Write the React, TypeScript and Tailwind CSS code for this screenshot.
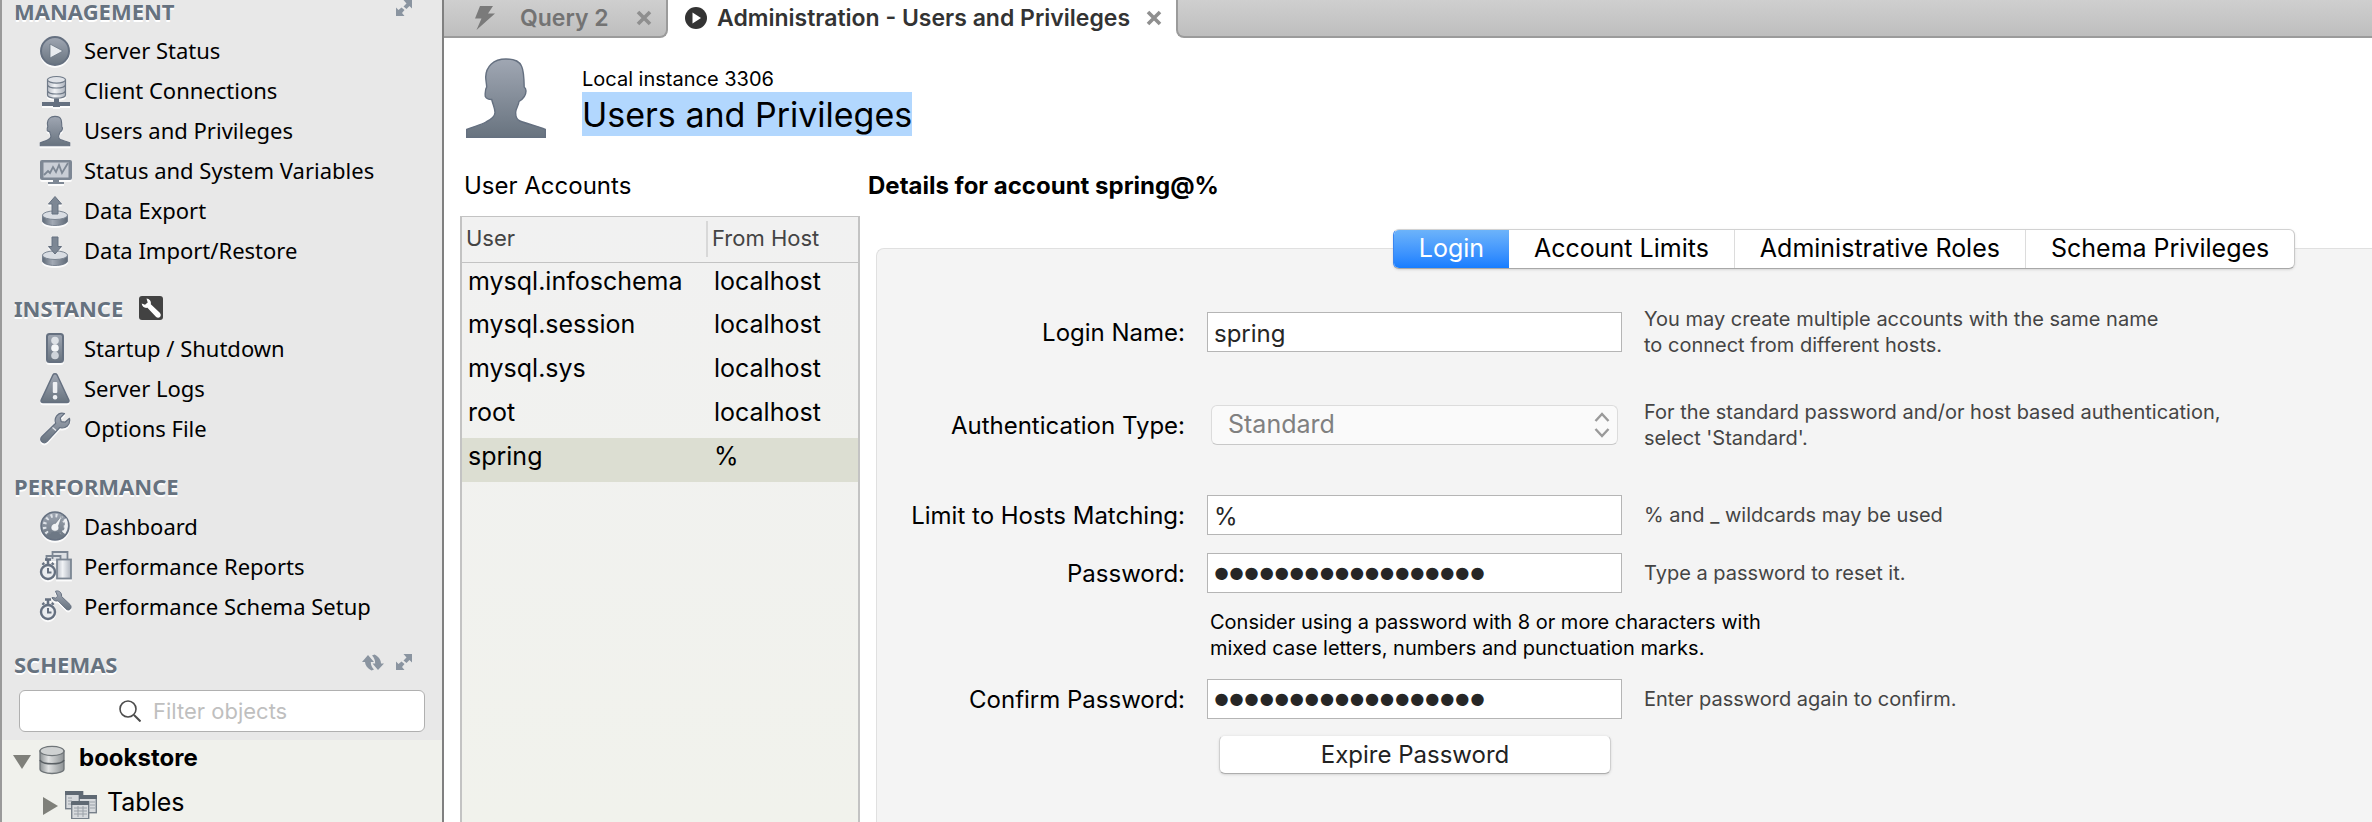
import type { ReactNode } from "react";

const Glyph = ({ children }: { children: ReactNode }) => (
  <svg
    viewBox="0 0 32 32"
    className="h-8 w-8 shrink-0 overflow-visible drop-shadow-[0_2px_0_rgba(255,255,255,0.85)]"
    aria-hidden="true"
  >
    {children}
  </svg>
);

const Defs = () => (
  <svg className="absolute h-0 w-0" aria-hidden="true">
    <defs>
      <linearGradient id="steel" x1="0" y1="0" x2="0" y2="1">
        <stop offset="0" stopColor="#a0a7b3" />
        <stop offset="1" stopColor="#68737f" />
      </linearGradient>
      <linearGradient id="pale" x1="0" y1="0" x2="1" y2="0">
        <stop offset="0" stopColor="#b9bec7" />
        <stop offset="0.4" stopColor="#f1f3f6" />
        <stop offset="1" stopColor="#adb3bd" />
      </linearGradient>
      <linearGradient id="rim" x1="0" y1="0" x2="1" y2="0">
        <stop offset="0" stopColor="#5f6a77" />
        <stop offset="0.4" stopColor="#a3aab5" />
        <stop offset="1" stopColor="#5f6a77" />
      </linearGradient>
      <linearGradient id="metal" x1="0" y1="0" x2="1" y2="0">
        <stop offset="0" stopColor="#8d9294" />
        <stop offset="0.35" stopColor="#e0e2e2" />
        <stop offset="1" stopColor="#8d9294" />
      </linearGradient>
    </defs>
  </svg>
);

const PlayIcon = () => (
  <Glyph>
    <circle cx="15" cy="17" r="14" fill="url(#steel)" stroke="#657080" strokeWidth="2" />
    <path d="M10 10v14l13-7z" fill="#e8ebef" stroke="#6b7684" strokeWidth="0.8" />
  </Glyph>
);

const ClientIcon = () => (
  <Glyph>
    <path d="M7.5 6v15c0 1.8 4 3.2 9 3.2s9-1.4 9-3.2V6z" fill="url(#pale)" stroke="#6f7a88" strokeWidth="1.2" />
    <ellipse cx="16.5" cy="5.8" rx="9" ry="3.3" fill="#dfe2e7" stroke="#6f7a88" strokeWidth="1.2" />
    <path d="M7.5 11c1 4 17 4 18 0M7.5 17c1 4 17 4 18 0" fill="none" stroke="#6f7a88" strokeWidth="1.2" />
    <path d="M14 24.5h5v3.5h-5z" fill="#657080" />
    <path d="M2 28h28v4h-10v1h-7v-1H2z" fill="#657080" />
  </Glyph>
);

const personPath =
  "M40 1C48 1 53 2.5 55.5 8C57.5 12 58 18 58.2 29C59.5 30 60 31 60 33C60 38 57 41 53 43.5C52.5 48 50 50 49.7 54C49.5 58 50.5 61.5 54 63C61 66 72 68 79.3 71.5V79.4H0.7V71.5C7 68.5 14 67.5 20 64C25 61.5 29 59 29 54.5C29 50 27 47 25.7 41.5C22 41.5 20.5 41 19.3 38.5C19 35 19.3 31 20.7 29C20.5 25 19.7 22 19.7 19C20 9 27 1 40 1Z";

const PersonIcon = () => (
  <Glyph>
    <g transform="translate(0 2) scale(0.375)">
      <path d={personPath} fill="url(#steel)" stroke="#657080" strokeWidth="3" />
    </g>
  </Glyph>
);

const MonitorIcon = () => (
  <Glyph>
    <rect x="0" y="6" width="32" height="20" rx="2" fill="#7d8794" />
    <rect x="3.5" y="8.5" width="25" height="15" fill="#c9ced6" />
    <path d="M4 21l4-4 2 2 3-6 3 5 3-7 3 8 6-10" fill="none" stroke="#7d8794" strokeWidth="1.8" />
    <path d="M13 26h6v2h5v2H8v-2h5z" fill="#7d8794" />
  </Glyph>
);

const Disk = () => (
  <>
    <path d="M2.5 21v6c0 2.5 5.8 4.5 12.5 4.5s12.5-2 12.5-4.5v-6z" fill="url(#rim)" stroke="#657080" strokeWidth="0.8" />
    <ellipse cx="15" cy="21.2" rx="12.5" ry="4.3" fill="#d9dde3" stroke="#7b8592" strokeWidth="1" />
  </>
);

const ExportIcon = () => (
  <Glyph>
    <Disk />
    <path d="M15 2.5l6.5 7.5h-3.5v10h-6V10H8.5z" fill="#7d8794" stroke="#657080" strokeWidth="1" />
  </Glyph>
);

const ImportIcon = () => (
  <Glyph>
    <Disk />
    <path d="M15 20l6.5-7.5h-3.5V3h-6v9.5H8.5z" fill="#7d8794" stroke="#657080" strokeWidth="1" />
  </Glyph>
);

const TrafficIcon = () => (
  <Glyph>
    <rect x="7" y="2" width="16" height="28" rx="2.5" fill="url(#steel)" stroke="#657080" strokeWidth="2" />
    <circle cx="15" cy="8.5" r="3.8" fill="#dde1e6" />
    <circle cx="15" cy="16" r="3.8" fill="#f4f6f8" />
    <circle cx="15" cy="23.5" r="3.8" fill="#cfd4da" />
  </Glyph>
);

const WarningIcon = () => (
  <Glyph>
    <path
      d="M13 2.8c.8-1.4 3.2-1.4 4 0L28.8 28c.6 1.4-.3 2.5-1.8 2.5H3c-1.5 0-2.4-1.1-1.8-2.5z"
      fill="url(#steel)"
      stroke="#657080"
      strokeWidth="1.5"
    />
    <rect x="12.8" y="10" width="4.5" height="11" rx="1" fill="#eef0f3" />
    <rect x="12.8" y="23" width="4.5" height="4.5" rx="2" fill="#eef0f3" />
  </Glyph>
);

const wrenchPath =
  "M24.5 1.5c-3-.9-6.3.2-8 2.7-1.5 2.2-1.7 4.8-.8 7L2 24.5c-1.8 1.8-1.7 4 0 5.4 1.5 1.3 3.6 1.1 5.2-.6L19.8 15.5c2.6.9 5.2.5 7.3-1.2 2.2-1.8 3-4.6 2.4-8L25 10.2l-3.8-.5-.9-3.9z";

const WrenchIcon = () => (
  <Glyph>
    <path d={wrenchPath} fill="url(#steel)" stroke="#657080" strokeWidth="1.2" strokeLinejoin="round" />
    <path d="M12.5 15.5l3.5 3" stroke="#e3e6ea" strokeWidth="1.2" />
  </Glyph>
);

const GaugeIcon = () => (
  <Glyph>
    <circle cx="15" cy="16" r="14" fill="url(#steel)" stroke="#657080" strokeWidth="1.5" />
    <circle cx="15" cy="16" r="10.5" fill="none" stroke="#dfe3e8" strokeWidth="3.5" strokeDasharray="2 3" pathLength="66" />
    <path d="M25 9c2 4 2 10-1 14" fill="none" stroke="#eef0f3" strokeWidth="3" />
    <path d="M7 26c4 4 12 4 16 0l-5-4h-6z" fill="#6d7885" />
    <path
      d="M22.5 4.5L18.5 16c1.2 2.8-.6 5.2-3.5 5.2-3.5 0-5.2-3.5-3-6.2 1.2-1.3 2.2-1.5 3.5-1.6z"
      fill="#f1f3f5"
      stroke="#6d7885"
      strokeWidth="0.6"
    />
  </Glyph>
);

const Stopwatch = () => (
  <>
    <path d="M5 9.5h6M8 9.5v5M2.5 13l1.5 1.5M13.5 13L12 14.5" stroke="#657080" strokeWidth="2.6" />
    <circle cx="8" cy="22" r="7" fill="#eceef1" stroke="#657080" strokeWidth="2.4" />
    <path d="M8 18v4.5h3.5" fill="none" stroke="#657080" strokeWidth="2" />
  </>
);

const ReportsIcon = () => (
  <Glyph>
    <path d="M12.5 9V2h15v7M6.5 11V6h14v5" fill="#dde0e4" stroke="#7b8592" strokeWidth="1.8" />
    <rect x="17" y="9.5" width="14" height="19" fill="url(#pale)" stroke="#7b8592" strokeWidth="1.8" />
    <Stopwatch />
  </Glyph>
);

const SetupIcon = () => (
  <Glyph>
    <Stopwatch />
    <path
      d="M15.5 1.2c3-1 5.8.8 6 3.8l.1 1.5 8.4 8c1.5 1.5 1.3 3.6.2 4.7-1.2 1.1-3 1-4.2-.3L18 10.8c-2.7.8-5.2-.6-6-3.3l3.6.5 2-1.7z"
      fill="url(#steel)"
      stroke="#657080"
      strokeWidth="1"
    />
  </Glyph>
);

const ExpandIcon = () => (
  <svg viewBox="0 0 16 16" className="h-4 w-4" aria-hidden="true">
    <path d="M7.5 0H16v8.5l-2.5-2.5-3 3L7.500 6.500l3-3zM8.5 16H0V7.500L2.500 10l3-2.500L8.500 10l-2.500 3z" fill="#8a94a0" />
  </svg>
);

const RefreshIcon = () => (
  <svg viewBox="0 0 22 17" className="h-[17px] w-[22px]" aria-hidden="true">
    <path d="M6 1l6 7H8.800c0 3 1.200 5.500 3.200 7.500L9.500 16.500C5.500 14.500 3.200 11.500 3 8H0z" fill="#8a94a0" />
    <path d="M16 16l6-6.500h-3C19 5.500 16.500 2.500 12.500.5L10 1.500c2 2 3.200 4.500 3.200 8H10.500z" fill="#8a94a0" />
  </svg>
);

type NavItem = { label: string; icon: ReactNode };

const management: NavItem[] = [
  { label: "Server Status", icon: <PlayIcon /> },
  { label: "Client Connections", icon: <ClientIcon /> },
  { label: "Users and Privileges", icon: <PersonIcon /> },
  { label: "Status and System Variables", icon: <MonitorIcon /> },
  { label: "Data Export", icon: <ExportIcon /> },
  { label: "Data Import/Restore", icon: <ImportIcon /> },
];

const instance: NavItem[] = [
  { label: "Startup / Shutdown", icon: <TrafficIcon /> },
  { label: "Server Logs", icon: <WarningIcon /> },
  { label: "Options File", icon: <WrenchIcon /> },
];

const performance: NavItem[] = [
  { label: "Dashboard", icon: <GaugeIcon /> },
  { label: "Performance Reports", icon: <ReportsIcon /> },
  { label: "Performance Schema Setup", icon: <SetupIcon /> },
];

const NavList = ({ items }: { items: NavItem[] }) => (
  <ul>
    {items.map((item) => (
      <li key={item.label}>
        <a href="#" className="flex h-10 items-center gap-3 pl-[38px] text-[22px] whitespace-nowrap text-black">
          {item.icon}
          {item.label}
        </a>
      </li>
    ))}
  </ul>
);

const heading = "text-[22px] font-bold text-[#66727f] [text-shadow:0_2px_0_#fff]";

const Sidebar = () => (
  <aside className="flex w-[444px] shrink-0 flex-col border-r-2 border-l-2 border-r-[#808080] border-l-[#9a9a9a] bg-[#e8e8e8] font-['Noto_Sans',sans-serif]">
    <div className="flex h-[30px] items-start justify-between pr-[30px] pl-3">
      <h2 className={`${heading} leading-[22px]`}>MANAGEMENT</h2>
      <button type="button" aria-label="Expand management">
        <ExpandIcon />
      </button>
    </div>
    <NavList items={management} />
    <div className="mt-[18px] flex h-10 items-center gap-4 pl-3">
      <h2 className={heading}>INSTANCE</h2>
      <svg viewBox="0 0 24 24" className="h-6 w-6" aria-hidden="true">
        <rect width="24" height="24" rx="3" fill="#424242" />
        <path
          d="M7.5 2.5c3 .2 5 2.8 4.3 5.7l9 8.6c1.4 1.5 1.2 3.2.2 4.2-1.1 1.1-2.9 1-4.1-.3l-8.500-8.900C5.600 12.500 3 10.500 2.700 7.500l3.300 1.300 2.700-2.400z"
          fill="#fff"
        />
      </svg>
    </div>
    <NavList items={instance} />
    <div className="mt-[18px] flex h-10 items-center pl-3">
      <h2 className={heading}>PERFORMANCE</h2>
    </div>
    <NavList items={performance} />
    <div className="mt-[18px] flex h-10 items-center pr-[30px] pl-3">
      <h2 className={`${heading} mr-auto`}>SCHEMAS</h2>
      <div className="flex items-center gap-3 pb-1">
        <button type="button" aria-label="Refresh schemas">
          <RefreshIcon />
        </button>
        <button type="button" aria-label="Expand schemas">
          <ExpandIcon />
        </button>
      </div>
    </div>
    <label className="mx-[17px] mt-1.5 mb-2 flex h-[42px] items-center gap-3 rounded-md border border-[#b0b0b0] bg-white pl-[99px] font-[Inter,sans-serif]">
      <svg viewBox="0 0 22 22" className="h-[22px] w-[22px] shrink-0" aria-hidden="true">
        <circle cx="9" cy="9" r="8" fill="none" stroke="#4c4c4c" strokeWidth="1.6" />
        <path d="M15 15l6.5 6.5" stroke="#4c4c4c" strokeWidth="2" />
      </svg>
      <input
        type="search"
        aria-label="Filter objects"
        placeholder="Filter objects"
        className="w-full min-w-0 bg-transparent text-[22px] outline-none placeholder:text-[#bfbfbf]"
      />
    </label>
    <ul className="flex-1 bg-[#f0f1ec] font-[Inter,sans-serif] text-black">
      <li className="flex h-9 items-center pl-[11px] text-[24px] font-bold">
        <svg viewBox="0 0 18 16" className="mt-2 h-4 w-[18px]" aria-hidden="true">
          <path d="M0 1h18L9 15z" fill="#7f807a" />
        </svg>
        <svg viewBox="0 0 26 30" className="mt-1 ml-2 h-[30px] w-[26px]" aria-hidden="true">
          <path d="M1 6v18c0 2.600 5.300 4.500 12 4.500s12-1.900 12-4.500V6z" fill="url(#metal)" stroke="#6f7578" strokeWidth="1.3" />
          <ellipse cx="13" cy="6" rx="12" ry="4.6" fill="#cfd2d2" stroke="#6f7578" strokeWidth="1.3" />
          <path d="M1 15c2 5 22 5 24 0" fill="none" stroke="#5a6064" strokeWidth="1.6" />
        </svg>
        <span className="ml-3.5">bookstore</span>
      </li>
      <li className="mt-2 flex h-[38px] items-center pl-[41px] text-[25px]">
        <svg viewBox="0 0 16 18" className="mt-1.5 h-[18px] w-4" aria-hidden="true">
          <path d="M0 0l15 9-15 9z" fill="#7f807a" />
        </svg>
        <svg viewBox="0 0 32 28" className="mt-1 ml-1.5 h-7 w-8" aria-hidden="true">
          <g strokeWidth="1.4" stroke="#77808a" fill="#d7dadd">
            <rect x="0.7" y="0.7" width="17" height="17" />
            <rect x="14.3" y="4.7" width="17" height="17" />
            <rect x="6.7" y="10.7" width="17" height="17" />
          </g>
          <path d="M0 0h18v4H0zM14 4h18v4H14zM6 10h18v4H6z" fill="#5f6973" />
          <path
            d="M9 17h13M9 20h13M9 23h13M13 15v11M18 15v11M3 7h4M3 10h4M3 13h3M25 11h5M25 14h5M25 17h5"
            stroke="#9aa1a8"
            strokeWidth="1"
          />
        </svg>
        <span className="ml-2.5">Tables</span>
      </li>
    </ul>
  </aside>
);

const CloseMark = () => (
  <svg viewBox="0 0 16 16" className="h-4 w-4" aria-hidden="true">
    <path d="M2 2l12 12M14 2L2 14" stroke="#8f8f8f" strokeWidth="3.6" />
  </svg>
);

const inactiveTab = "border-b-2 border-[#9b9b9b] bg-linear-to-b from-[#cfcfcf] to-[#bebebe]";

const TabBar = () => (
  <div className="flex h-[38px] bg-white text-[23px] font-semibold">
    <div className={`flex w-[224px] items-center rounded-br-lg border-r-2 pl-[30px] ${inactiveTab}`}>
      <svg viewBox="0 0 22 24" className="h-6 w-[22px]" aria-hidden="true">
        <path d="M6 0h13l-5 7.5h7L2.500 24l5-11.500H1z" fill="#7a7a7a" />
      </svg>
      <button type="button" className="ml-6 text-[#737373]">
        Query 2
      </button>
      <button type="button" aria-label="Close Query 2" className="mr-3.5 ml-auto">
        <CloseMark />
      </button>
    </div>
    <div className="flex w-[508px] items-center pb-0.5 pl-4">
      <svg viewBox="0 0 24 24" className="h-6 w-6" aria-hidden="true">
        <circle cx="12" cy="12" r="11" fill="#333" />
        <path d="M8.5 6.500v11l8.500-5.500z" fill="#fff" />
      </svg>
      <button type="button" className="ml-[9px] whitespace-nowrap text-[#333]">
        Administration - Users and Privileges
      </button>
      <button type="button" aria-label="Close Administration" className="mr-3.5 ml-auto">
        <CloseMark />
      </button>
    </div>
    <div className={`flex-1 rounded-bl-lg border-l-2 ${inactiveTab}`} />
  </div>
);

const accounts = [
  { user: "mysql.infoschema", host: "localhost" },
  { user: "mysql.session", host: "localhost" },
  { user: "mysql.sys", host: "localhost" },
  { user: "root", host: "localhost" },
  { user: "spring", host: "%", selected: true },
];

const AccountsTable = () => (
  <div className="flex-1 border-x-2 border-t border-[#c3c3c3] bg-linear-to-b from-[#f1f1f1] to-[#f1f2ec]">
    <table className="w-full border-collapse text-left text-[25px] text-black">
      <thead>
        <tr className="h-[45px] border-b border-[#c3c3c3] text-[22px] text-[#444]">
          <th scope="col" className="w-[246px] p-0 pl-1 font-normal">
            <div className="flex h-9 items-center border-r-2 border-[#d8d8d8] pb-0.5">User</div>
          </th>
          <th scope="col" className="p-0 pb-0.5 pl-1 font-normal">
            From Host
          </th>
        </tr>
      </thead>
      <tbody>
        {accounts.map((row) => (
          <tr key={row.user} className={row.selected ? "h-11 bg-[#dcded2]" : "h-11"}>
            <td className="p-0 pb-1.5 pl-1.5">{row.user}</td>
            <td className="p-0 pb-1.5 pl-1.5">{row.host}</td>
          </tr>
        ))}
      </tbody>
    </table>
  </div>
);

const fieldBox = "h-10 w-full rounded-none border border-[#b5b5b5] bg-white px-1.5 text-[#262626] outline-none";
const textBox = `${fieldBox} pt-0.5 text-[24px]`;
const passwordBox = `${fieldBox} text-[43px] leading-9 font-bold font-['Liberation_Sans',sans-serif]`;

const Field = ({
  id,
  label,
  help,
  children,
}: {
  id: string;
  label: string;
  help: string[];
  children: ReactNode;
}) => (
  <div className="grid grid-cols-[308px_415px_1fr] items-center gap-x-[22px]">
    <label htmlFor={id} className="pt-0.5 text-right text-[24px] leading-8 whitespace-nowrap text-black">
      {label}
    </label>
    {children}
    <p className="text-[20px] leading-[26px] whitespace-nowrap text-[#444]">
      {help.map((line) => (
        <span key={line} className="block">
          {line}
        </span>
      ))}
    </p>
  </div>
);

const detailTabs = ["Account Limits", "Administrative Roles", "Schema Privileges"];

const DetailsPanel = () => (
  <div className="mt-8 flex-1 rounded-tl-lg border-t border-l border-[#e0e0e0] bg-[#f4f4f4]">
    <div className="-mt-5 ml-[516px] flex h-10 w-fit overflow-hidden rounded-md border border-t-[#d2d2d2] border-r-[#c8c8c8] border-b-[#a8a8a8] border-l-[#3b86f0] bg-white text-[25px] whitespace-nowrap text-black shadow-sm">
      <button type="button" className="w-[115px] bg-linear-to-b from-[#6cb3fa] to-[#167dff] text-white">
        Login
      </button>
      {detailTabs.map((tab) => (
        <button key={tab} type="button" className="border-r border-[#dcdcdc] px-[25px] last:border-r-0">
          {tab}
        </button>
      ))}
    </div>
    <form className="flex flex-col pt-[37px]" onSubmit={(event) => event.preventDefault()}>
      <Field
        id="login-name"
        label="Login Name:"
        help={["You may create multiple accounts with the same name", "to connect from different hosts."]}
      >
        <input id="login-name" type="text" defaultValue="spring" className={textBox} />
      </Field>
      <div className="h-[41px]" />
      <Field
        id="auth-type"
        label="Authentication Type:"
        help={["For the standard password and/or host based authentication,", "select 'Standard'."]}
      >
        <div className="grid px-1">
          <select
            id="auth-type"
            disabled
            className="col-start-1 row-start-1 h-10 appearance-none rounded-md border border-[#dcdcdc] border-b-[#c8c8c8] bg-[#fafafa] pl-4 text-[25px] text-[#808080] opacity-100"
          >
            <option>Standard</option>
          </select>
          <svg
            viewBox="0 0 16 26"
            className="pointer-events-none col-start-1 row-start-1 mr-2 h-[26px] w-4 self-center justify-self-end"
            aria-hidden="true"
          >
            <path d="M1.5 9L8 2l6.5 7M1.5 17L8 24l6.5-7" fill="none" stroke="#9a9a9a" strokeWidth="2.4" />
          </svg>
        </div>
      </Field>
      <div className="h-11" />
      <Field id="host-limit" label="Limit to Hosts Matching:" help={["% and _ wildcards may be used"]}>
        <input id="host-limit" type="text" defaultValue="%" className={textBox} />
      </Field>
      <div className="h-[18px]" />
      <Field id="password" label="Password:" help={["Type a password to reset it."]}>
        <input id="password" type="password" defaultValue="aaaaaaaaaaaaaaaaaa" className={passwordBox} />
      </Field>
      <p className="mt-4 ml-[333px] text-[20px] leading-[26px] text-black">
        Consider using a password with 8 or more characters with
        <br />
        mixed case letters, numbers and punctuation marks.
      </p>
      <div className="h-[18px]" />
      <Field id="confirm" label="Confirm Password:" help={["Enter password again to confirm."]}>
        <input id="confirm" type="password" defaultValue="aaaaaaaaaaaaaaaaaa" className={passwordBox} />
      </Field>
      <button
        type="button"
        className="mt-4 ml-[342px] h-[39px] w-[392px] rounded-md border border-t-[#ececec] border-r-[#cfcfcf] border-b-[#adadad] border-l-[#cfcfcf] bg-white text-[24px] text-[#222] shadow-sm"
      >
        Expire Password
      </button>
    </form>
  </div>
);

export default function App() {
  return (
    <div className="flex min-h-screen bg-white">
      <Defs />
      <Sidebar />
      <main className="flex min-w-0 flex-1 flex-col overflow-hidden font-[Inter,sans-serif]">
        <TabBar />
        <header className="flex h-[124px] items-start gap-9 pt-5 pl-[22px]">
          <svg viewBox="0 0 80 80" className="h-20 w-20" aria-hidden="true">
            <path d={personPath} fill="url(#steel)" stroke="#657080" strokeWidth="1.4" />
          </svg>
          <div className="pt-2">
            <p className="text-[20px] leading-[26px] text-black">Local instance 3306</p>
            <h1 className="w-fit bg-[#b2d7fe] pt-0.5 text-[34px] leading-[42px] text-black">Users and Privileges</h1>
          </div>
        </header>
        <div className="flex flex-1 gap-2 pl-4">
          <section className="flex w-[400px] shrink-0 flex-col">
            <h2 className="h-[54px] pt-2 pl-1 text-[24px] leading-8 text-black">User Accounts</h2>
            <AccountsTable />
          </section>
          <section className="flex min-w-0 flex-1 flex-col">
            <h2 className="h-[54px] pt-2 text-[24px] leading-8 font-bold text-black">Details for account spring@%</h2>
            <div className="flex flex-1 flex-col pl-2">
              <DetailsPanel />
            </div>
          </section>
        </div>
      </main>
    </div>
  );
}
